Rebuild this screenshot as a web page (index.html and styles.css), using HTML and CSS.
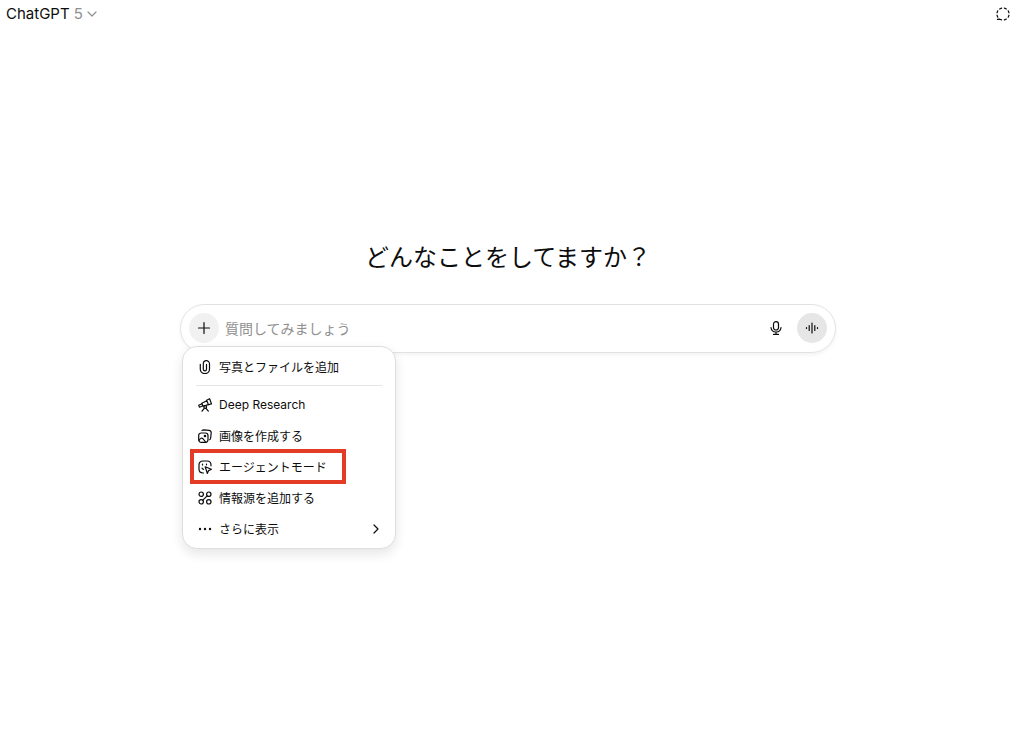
FILE: index.html
```
<!DOCTYPE html>
<html lang="ja">
  <head>
    <meta charset="UTF-8" />
    <meta name="viewport" content="width=device-width, initial-scale=1.0" />
    <title>ChatGPT</title>
    <link rel="stylesheet" href="styles.css">
  </head>

  <body>
    <header class="header">
      <button type="button" class="model">
        <span>ChatGPT</span>
        <span class="version">5</span>
        <svg class="arrow" viewBox="0 0 10 10"><path d="M1 3l4 4 4-4" /></svg>
      </button>
      <button type="button" class="temporary" aria-label="一時チャット">
        <svg class="icon" viewBox="0 0 14 14">
          <path d="M3.600 2L5.600 1.100M8.400 1.100l2 .9M12.200 3.800l.8 2M13 8.200l-.8 2M10.400 12l-2 .9M5.600 12.900L3.800 12.200 1.400 12.400M1.800 10.200L1 8.200M1 5.800l.8-2" />
        </svg>
      </button>
    </header>

    <main class="main">
      <h1 class="title">どんなことをしてますか？</h1>

      <form class="composer">
        <button type="button" class="round plus" aria-label="追加">
          <svg class="icon" viewBox="0 0 14 14"><path d="M7 1.500v11M1.500 7h11" /></svg>
        </button>
        <input class="question" type="text" placeholder="質問してみましょう" aria-label="質問" />
        <button type="button" class="mic" aria-label="音声入力">
          <svg class="icon" viewBox="0 0 14 14">
            <rect x="4.500" y=".7" width="5" height="8.300" rx="2.500" />
            <path d="M2 6.500C2.300 9.500 4.200 11 7 11s4.700-1.500 5-4.500M7 11v2.400M4.500 13.400h5" />
          </svg>
        </button>
        <button type="button" class="round voice" aria-label="音声モード">
          <svg class="icon" viewBox="0 0 14 14"><path d="M1.500 6.500v1M4.200 4.500v5M7 2v10M9.800 4.500v5M12.500 6.500v1" /></svg>
        </button>

        <div class="menu">
          <button type="button" class="item">
            <svg class="icon" viewBox="0 0 14 14">
              <path d="M2.300 4.300v5a4.600 4.300 0 0 0 9.200 0V3.800a3.100 3.100 0 0 0-6.200 0v5.400a1.600 1.600 0 0 0 3.200 0V4.400" />
            </svg>
            <span>写真とファイルを追加</span>
          </button>
          <hr class="line" />
          <button type="button" class="item">
            <svg class="icon" viewBox="0 0 14 14">
              <path d="M8.600 2.200l3-1.500 1.900 5.200-3 .9zM8.800 2.800L3.800 5.200l1.300 3 5.200-1.600M4 5.700L.7 7.300l.8 1.900 3.400-1.400M6.300 10.300L4 13.200M8 10.300l2.300 2.900" />
              <circle cx="7.200" cy="9" r="1.400" />
            </svg>
            <span>Deep Research</span>
          </button>
          <button type="button" class="item">
            <svg class="icon" viewBox="0 0 14 14">
              <rect x=".7" y="4" width="9.300" height="9.300" rx="2.500" />
              <path d="M4 1.500Q4.500.8 6 .8l5 .5q2.300.3 2.200 2.500l-.5 5q-.1 1.400-1 1.900M1 11.300q2.300-3.500 4.300-1.200l2.300 2.900" />
              <circle cx="7" cy="7" r=".7" />
            </svg>
            <span>画像を作成する</span>
          </button>
          <button type="button" class="item marked">
            <svg class="icon" viewBox="0 0 14 14">
              <path d="M5.500 13H5Q1 13 1 9V5Q1 1 5 1h4q4 0 4 4v.8M7.200 6.800l6.200 2.500-2.800 1.300-1.300 2.800z" />
              <path d="M4.500 4v1M8.500 4v.8M4 8.200q.7 1 1.600 1.200" />
            </svg>
            <span>エージェントモード</span>
          </button>
          <button type="button" class="item">
            <svg class="icon" viewBox="0 0 14 14">
              <circle cx="3.200" cy="3.200" r="2.200" />
              <circle cx="10.800" cy="3.200" r="2.200" />
              <circle cx="3.200" cy="10.800" r="2.200" />
              <circle cx="10.800" cy="10.800" r="2.200" />
              <path d="M9.200 4.800L4.800 9.200" />
            </svg>
            <span>情報源を追加する</span>
          </button>
          <button type="button" class="item">
            <svg class="icon dots" viewBox="0 0 14 14">
              <circle cx="2" cy="7" r="1.200" />
              <circle cx="7" cy="7" r="1.200" />
              <circle cx="12" cy="7" r="1.200" />
            </svg>
            <span>さらに表示</span>
            <svg class="arrow more" viewBox="0 0 10 10"><path d="M3 1l4 4-4 4" /></svg>
          </button>
        </div>
      </form>
    </main>
  </body>
</html>
```
FILE: styles.css
```
* {
  box-sizing: border-box;
  padding: 0;
  margin: 0;
}

body {
  min-height: 100vh;
  background-color: #fff;
  color: #0d0d0d;
  font-family: Inter, "Noto Sans CJK JP", sans-serif;
}

button {
  display: flex;
  align-items: center;
  border: none;
  background: none;
  color: inherit;
  font: inherit;
  cursor: pointer;
}

.icon,
.arrow {
  flex: none;
  width: 14px;
  height: 14px;
  fill: none;
  stroke: currentColor;
  stroke-width: 1.2;
  stroke-linecap: round;
  stroke-linejoin: round;
}

.arrow {
  width: 10px;
  height: 10px;
}

.header {
  display: flex;
  justify-content: space-between;
  align-items: center;
  height: 27px;
  padding: 0 14px 0 6px;
}

.model {
  gap: 4px;
  font-size: 15px;
}

.version,
.model .arrow {
  color: #8f8f8f;
}

.main {
  padding: 213px 188px 0 180px;
}

.title {
  margin-bottom: 28px;
  font-size: 24px;
  font-weight: 400;
  line-height: 36px;
  text-align: center;
}

.composer {
  position: relative;
  display: flex;
  align-items: center;
  height: 49px;
  padding: 0 8px 1px;
  border: 1px solid #e2e2e2;
  border-radius: 25px;
  box-shadow: 0 2px 4px rgba(0, 0, 0, 0.05);
}

.round {
  justify-content: center;
  flex: none;
  width: 30px;
  height: 30px;
  border-radius: 50%;
}

.plus {
  background-color: #f1f1f1;
}

.voice {
  background-color: #e6e6e6;
}

.question {
  flex: 1;
  min-width: 0;
  padding: 0 6px;
  border: none;
  outline: none;
  background: none;
  font-family: inherit;
  font-size: 14px;
}

.question::placeholder {
  color: #8f8f8f;
}

.mic {
  margin-right: 14px;
}

/* 追加メニュー */
.menu {
  position: absolute;
  top: 41px;
  left: 1px;
  width: 214px;
  padding: 4px 0;
  border: 1px solid #dedede;
  border-radius: 15px;
  background-color: #fff;
  box-shadow: 0 5px 12px rgba(0, 0, 0, 0.1);
}

.item {
  position: relative;
  gap: 7px;
  width: 100%;
  height: 31px;
  padding: 0 14px 0 15px;
  font-size: 12px;
}

.line {
  margin: 3px 13px;
  border: none;
  border-top: 1px solid #e5e5e5;
}

/* エージェントモードの赤枠 */
.marked::after {
  content: "";
  position: absolute;
  top: -2px;
  left: 7px;
  box-sizing: border-box;
  width: 156px;
  height: 35px;
  border: 4px solid #e33b26;
}

.dots {
  fill: currentColor;
  stroke: none;
}

.more {
  margin-left: auto;
}
```
